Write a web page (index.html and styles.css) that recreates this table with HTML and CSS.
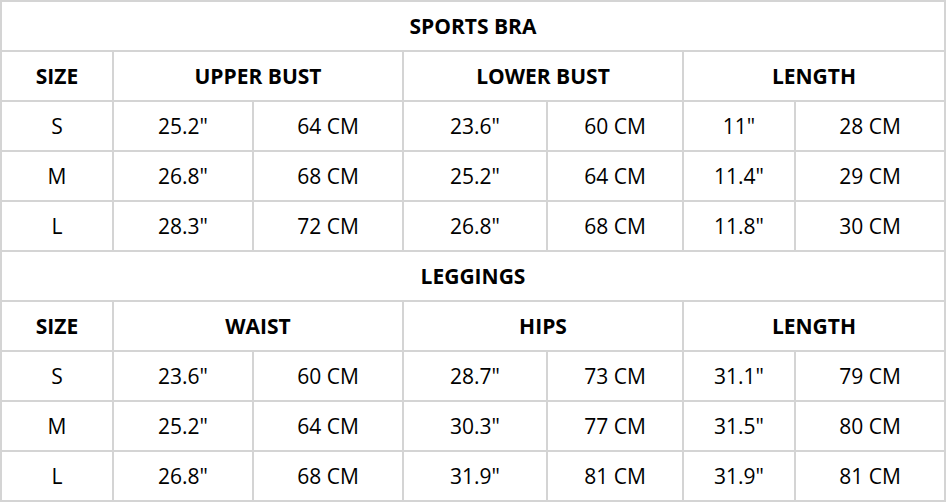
FILE: index.html
```html
<!DOCTYPE html>
<html>
<head>
<meta charset="utf-8">
<link rel="stylesheet" href="styles.css">
</head>
<body>
<div class="chart">
  <div class="cell title span7">SPORTS BRA</div>
  <div class="cell head">SIZE</div>
  <div class="cell head span2">UPPER BUST</div>
  <div class="cell head span2">LOWER BUST</div>
  <div class="cell head span2">LENGTH</div>

  <div class="cell">S</div><div class="cell">25.2"</div><div class="cell">64 CM</div><div class="cell">23.6"</div><div class="cell">60 CM</div><div class="cell">11"</div><div class="cell">28 CM</div>
  <div class="cell">M</div><div class="cell">26.8"</div><div class="cell">68 CM</div><div class="cell">25.2"</div><div class="cell">64 CM</div><div class="cell">11.4"</div><div class="cell">29 CM</div>
  <div class="cell">L</div><div class="cell">28.3"</div><div class="cell">72 CM</div><div class="cell">26.8"</div><div class="cell">68 CM</div><div class="cell">11.8"</div><div class="cell">30 CM</div>

  <div class="cell title span7">LEGGINGS</div>
  <div class="cell head">SIZE</div>
  <div class="cell head span2">WAIST</div>
  <div class="cell head span2">HIPS</div>
  <div class="cell head span2">LENGTH</div>

  <div class="cell">S</div><div class="cell">23.6"</div><div class="cell">60 CM</div><div class="cell">28.7"</div><div class="cell">73 CM</div><div class="cell">31.1"</div><div class="cell">79 CM</div>
  <div class="cell">M</div><div class="cell">25.2"</div><div class="cell">64 CM</div><div class="cell">30.3"</div><div class="cell">77 CM</div><div class="cell">31.5"</div><div class="cell">80 CM</div>
  <div class="cell">L</div><div class="cell">26.8"</div><div class="cell">68 CM</div><div class="cell">31.9"</div><div class="cell">81 CM</div><div class="cell">31.9"</div><div class="cell">81 CM</div>
</div>
</body>
</html>
```
FILE: styles.css
```css
html, body {
  margin: 0;
  padding: 0;
  background: #ffffff;
}

.chart {
  display: grid;
  grid-template-columns: 110px 138px 148px 142px 134px 110px 148px;
  grid-auto-rows: 48px;
  gap: 2px;
  padding: 2px;
  width: 946px;
  box-sizing: border-box;
  background: #d4d4d4;
  font-family: "Open Sans", "Liberation Sans", sans-serif;
  font-size: 21px;
  color: #000000;
}

.cell {
  background: #ffffff;
  display: flex;
  align-items: center;
  justify-content: center;
  white-space: nowrap;
}

.head,
.title {
  font-weight: 700;
}

.span2 {
  grid-column: span 2;
}

.span7 {
  grid-column: span 7;
}
```
